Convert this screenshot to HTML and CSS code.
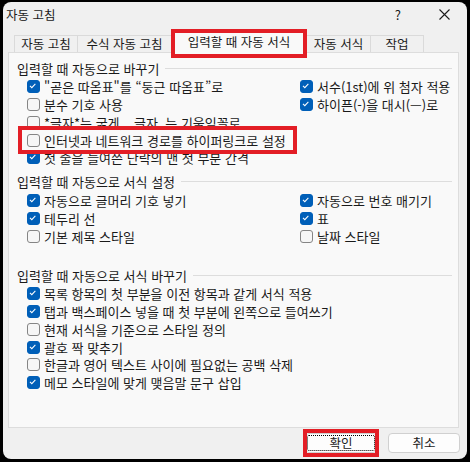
FILE: index.html
```html
<!DOCTYPE html>
<html lang="ko">
<head>
    <meta charset="UTF-8">
    <title>자동 고침</title>
    <link rel="stylesheet" href="styles.css">
</head>
<body>
    <div class="window">
        <div class="titlebar">
            <span class="title">자동 고침</span>
            <span class="help">?</span>
            <svg class="close" width="11" height="11" viewBox="0 0 11 11"><path d="M0.5 0.5L10.5 10.5M10.5 0.5L0.5 10.5" stroke="#1a1a1a" stroke-width="1.1" fill="none"/></svg>
        </div>

        <div class="tabs">
            <div class="tab t1">자동 고침</div>
            <div class="tab t2">수식 자동 고침</div>
            <div class="tab t3 active">입력할 때 자동 서식<span class="mark tab-mark"></span></div>
            <div class="tab t4">자동 서식</div>
            <div class="tab t5">작업</div>
        </div>

        <div class="panel">
            <div class="legend"><span>입력할 때 자동으로 바꾸기</span></div>
            <div class="options five">
                <div class="opt"><span class="box on"><svg viewBox="0 0 13 13"><path d="M3.3 6.8L5.5 8.9L9.7 4.4"/></svg></span>"곧은 따옴표"를 “둥근 따옴표”로</div>
                <div class="opt"><span class="box"></span>분수 기호 사용</div>
                <div class="opt"><span class="box"></span>*글자*는 굵게, _글자_는 기울임꼴로</div>
                <div class="opt marked"><span class="box"></span>인터넷과 네트워크 경로를 하이퍼링크로 설정<span class="mark row-mark"></span></div>
                <div class="opt"><span class="box on"><svg viewBox="0 0 13 13"><path d="M3.3 6.8L5.5 8.9L9.7 4.4"/></svg></span>첫 줄을 들여쓴 단락의 맨 첫 부분 간격</div>
                <div class="opt"><span class="box on"><svg viewBox="0 0 13 13"><path d="M3.3 6.8L5.5 8.9L9.7 4.4"/></svg></span>서수(1st)에 위 첨자 적용</div>
                <div class="opt"><span class="box on"><svg viewBox="0 0 13 13"><path d="M3.3 6.8L5.5 8.9L9.7 4.4"/></svg></span>하이픈(-)을 대시(—)로</div>
            </div>

            <div class="legend second"><span>입력할 때 자동으로 서식 설정</span></div>
            <div class="options three">
                <div class="opt"><span class="box on"><svg viewBox="0 0 13 13"><path d="M3.3 6.8L5.5 8.9L9.7 4.4"/></svg></span>자동으로 글머리 기호 넣기</div>
                <div class="opt"><span class="box on"><svg viewBox="0 0 13 13"><path d="M3.3 6.8L5.5 8.9L9.7 4.4"/></svg></span>테두리 선</div>
                <div class="opt"><span class="box"></span>기본 제목 스타일</div>
                <div class="opt"><span class="box on"><svg viewBox="0 0 13 13"><path d="M3.3 6.8L5.5 8.9L9.7 4.4"/></svg></span>자동으로 번호 매기기</div>
                <div class="opt"><span class="box on"><svg viewBox="0 0 13 13"><path d="M3.3 6.8L5.5 8.9L9.7 4.4"/></svg></span>표</div>
                <div class="opt"><span class="box"></span>날짜 스타일</div>
            </div>

            <div class="legend third"><span>입력할 때 자동으로 서식 바꾸기</span></div>
            <div class="options single">
                <div class="opt"><span class="box on"><svg viewBox="0 0 13 13"><path d="M3.3 6.8L5.5 8.9L9.7 4.4"/></svg></span>목록 항목의 첫 부분을 이전 항목과 같게 서식 적용</div>
                <div class="opt"><span class="box on"><svg viewBox="0 0 13 13"><path d="M3.3 6.8L5.5 8.9L9.7 4.4"/></svg></span>탭과 백스페이스 넣을 때 첫 부분에 왼쪽으로 들여쓰기</div>
                <div class="opt"><span class="box"></span>현재 서식을 기준으로 스타일 정의</div>
                <div class="opt"><span class="box on"><svg viewBox="0 0 13 13"><path d="M3.3 6.8L5.5 8.9L9.7 4.4"/></svg></span>괄호 짝 맞추기</div>
                <div class="opt"><span class="box"></span>한글과 영어 텍스트 사이에 필요없는 공백 삭제</div>
                <div class="opt"><span class="box on"><svg viewBox="0 0 13 13"><path d="M3.3 6.8L5.5 8.9L9.7 4.4"/></svg></span>메모 스타일에 맞게 맺음말 문구 삽입</div>
            </div>
        </div>

        <div class="buttons">
            <button class="btn default">확인<span class="mark btn-mark"></span></button>
            <button class="btn">취소</button>
        </div>
    </div>
</body>
</html>
```

FILE: styles.css
```css
body {
    margin: 0;
    padding: 2px 3px 3px 3px;
    background-color: #000;
    font-family: "Noto Sans CJK KR", "Noto Sans", sans-serif;
    font-size: 13px;
    color: #1a1a1a;
}

.window {
    width: 464px;
    height: 457px;
    background-color: #f0f0f0;
    border-radius: 8px;
    display: flex;
    flex-direction: column;
}

.titlebar {
    height: 25px;
    display: flex;
    align-items: center;
    padding: 0 17px 0 3px;
}

.title {
    font-size: 12.5px;
    line-height: 16px;
}

.help {
    margin-left: auto;
    margin-right: 38px;
    font-size: 13px;
    line-height: 16px;
}

.tabs {
    height: 25px;
    display: flex;
    align-items: flex-end;
    margin-left: 11px;
}

.tab {
    height: 16px;
    line-height: 16px;
    font-size: 12.5px;
    text-align: center;
    border: 1px solid #dadada;
    border-bottom: none;
    border-right: none;
    background-color: #f0f0f0;
}

.t1 { width: 62px; }
.t2 { width: 93px; }
.t3 { width: 134px; }
.t4 { width: 63px; }
.t5 { width: 52px; border-right: 1px solid #dadada; }

.tab.active {
    position: relative;
    height: 22px;
    line-height: 22px;
    margin-bottom: -1px;
    background-color: #f9f9f9;
}

.panel {
    height: 369px;
    margin: 0 8px 0 5px;
    padding: 5px 6px 0 8px;
    border: 1px solid #dddddd;
    background-color: #f9f9f9;
}

.legend {
    display: flex;
    align-items: center;
    height: 20px;
}

.legend::after {
    content: "";
    flex: 1;
    height: 1px;
    margin-left: 6px;
    background-color: #dddddd;
}

.legend.second {
    margin-top: 5px;
}

.legend.third {
    margin-top: 20px;
}

.options {
    display: grid;
    grid-auto-flow: column;
    grid-template-columns: 273px 1fr;
    grid-auto-rows: 17.75px;
    padding-left: 10px;
}

.options.five {
    grid-template-rows: repeat(5, 17.75px);
}

.options.three {
    grid-template-rows: repeat(3, 17.75px);
}

.options.single {
    grid-auto-flow: row;
    grid-template-columns: 1fr;
}

.opt {
    display: flex;
    align-items: center;
    white-space: nowrap;
}

.opt.marked {
    position: relative;
}

.box {
    width: 11px;
    height: 11px;
    margin-right: 4px;
    border: 1px solid #858585;
    border-radius: 3px;
    background-color: #f6f6f6;
    flex-shrink: 0;
}

.box.on {
    border-color: #005fb8;
    background-color: #005fb8;
}

.box svg {
    display: block;
    width: 11px;
    height: 11px;
}

.box svg path {
    fill: none;
    stroke: #ffffff;
    stroke-width: 1.2;
    transform: translate(-1px, -1px);
}

.buttons {
    flex: 1;
    display: flex;
    justify-content: flex-end;
    align-items: flex-start;
    gap: 11px;
    padding: 5px 7px 0 0;
}

.btn {
    width: 72px;
    height: 20px;
    padding: 0;
    font-family: inherit;
    font-size: 12.5px;
    line-height: 18px;
    color: #1a1a1a;
    background-color: #fdfdfd;
    border: 1px solid #d0d0d0;
    border-radius: 4px;
}

.btn.default {
    position: relative;
    outline: 1px dotted #000;
    outline-offset: -3px;
}

.mark {
    position: absolute;
    border: 4px solid #e31e26;
    pointer-events: none;
}

.tab-mark {
    left: -1px;
    right: -1px;
    top: -2px;
    bottom: -5px;
}

.row-mark {
    left: -9px;
    width: 271px;
    top: -5px;
    bottom: -5px;
}

.btn-mark {
    left: -3px;
    right: -3px;
    top: -5px;
    bottom: -5px;
}
```
